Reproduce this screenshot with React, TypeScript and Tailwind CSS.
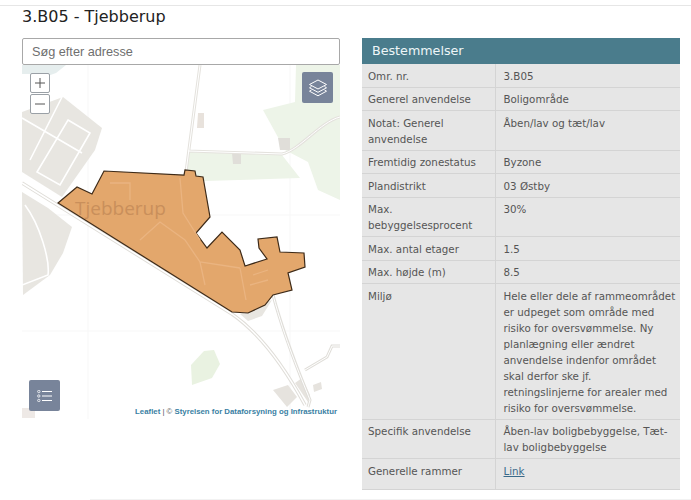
const rows: [string, string][] = [
  ["Omr. nr.", "3.B05"],
  ["Generel anvendelse", "Boligområde"],
  ["Notat: Generel anvendelse", "Åben/lav og tæt/lav"],
  ["Fremtidig zonestatus", "Byzone"],
  ["Plandistrikt", "03 Østby"],
  ["Max. bebyggelsesprocent", "30%"],
  ["Max. antal etager", "1.5"],
  ["Max. højde (m)", "8.5"],
  [
    "Miljø",
    "Hele eller dele af rammeområdet\ner udpeget som område med\nrisiko for oversvømmelse. Ny\nplanlægning eller ændret\nanvendelse indenfor området\nskal derfor ske jf.\nretningslinjerne for arealer med\nrisiko for oversvømmelse.",
  ],
  ["Specifik anvendelse", "Åben-lav boligbebyggelse, Tæt-\nlav boligbebyggelse"],
];

const MapDrawing = () => (
  <svg viewBox="22 65 318 354" className="absolute inset-0 h-full w-full" fill="none">
    {/* tile seams */}
    <path d="M88 65V419M22 331H340M22 215H340M290 65V419" stroke="#f7f7f7" />
    {/* green fields */}
    <path d="M296 65H340V200L318 190L308 162L285 150L263 110L295 102Z" fill="#edf4e8" />
    <path d="M188 152L282 155L300 178L205 181L186 175Z" fill="#edf4e8" />
    <path d="M204 351L214 350L220 364L212 378L192 385L191 365Z" fill="#e9f2e1" />
    <path d="M22 65H66L56 73L42 78L30 74H22Z" fill="#e6eeee" />
    {/* built up areas */}
    <path d="M22 112L63 97L102 128L95 150L62 197L22 172Z" fill="#e8e6e1" />
    <path d="M22 192L48 208L72 227L63 253L50 275L23 295Z" fill="#e8e6e1" />
    <path d="M240 314L272 300L262 316L248 321Z" fill="#e8e6e1" />
    <path d="M273 390L288 385L297 397L287 407Z" fill="#e6e3de" />
    <path d="M295 383L302 378L310 395L308 402Z" fill="#e6e3de" />
    <path d="M313 385L321 382L322 389L314 392Z" fill="#e6e3de" />
    <path d="M22 408H35V418H22Z" fill="#eee9e6" />
    <path d="M198 113H204V128H197Z" fill="#e8e2dc" />
    <path d="M232 153H241V164H233Z" fill="#e0ded9" />
    <path d="M278 138H290V150H280Z" fill="#e0ded9" />
    {/* roads */}
    <path d="M22 183L232 314C262 335 285 368 305 405" stroke="#e0ded9" strokeWidth="3.5" />
    <path d="M22 183L232 314C262 335 285 368 305 405" stroke="#fff" strokeWidth="1.5" />
    <path d="M273 295C285 340 300 375 310 400L308 407" stroke="#e0ded9" strokeWidth="3" />
    <path d="M273 295C285 340 300 375 310 400L308 407" stroke="#fff" strokeWidth="1" />
    <path d="M200 65L186 172M188 151L282 154C300 150 320 122 340 117" stroke="#e4e2dd" strokeWidth="3" />
    <path d="M200 65L186 172M188 151L282 154C300 150 320 122 340 117" stroke="#fff" strokeWidth="1" />
    <path d="M305 370L327 357L332 346H340" stroke="#e0ded9" strokeWidth="3" />
    <path d="M305 370L327 357L332 346H340" stroke="#fff" strokeWidth="1" />
    <path d="M22 118L82 153M62 97L30 160M68 120L90 133L60 185L37 172Z" stroke="#fff" strokeWidth="1.6" />
    <path d="M25 205C40 225 50 260 48 275L22 285" stroke="#fff" strokeWidth="1.6" />
    {/* area */}
    <path
      d="M58 203L77 187L92 194L104 171L184 175L185 170L195 171L196 176L203 177L210 217L196 233L207 248L222 232L240 250L245 266L267 259L259 248L258 239L277 237L280 252L304 253L305 267L288 273L292 290L273 295L265 305L248 313L232 312Z"
      fill="#e3a76c"
      stroke="#3d2a18"
      strokeWidth="1.2"
    />
    <path
      d="M110 183H130V200M180 178L183 213L200 240M140 240L160 222L185 240L200 262L240 268M200 262L205 285M240 268L246 300M250 285L268 280M253 275L268 270"
      stroke="#eab481"
      strokeWidth="1.3"
    />
    <text x="75" y="215" fill="#c98f5b" fontSize="19" fontFamily="'Open Sans', sans-serif">
      Tjebberup
    </text>
  </svg>
);

const App = () => {
  return (
    <div className="h-[500px] w-[691px] overflow-hidden bg-white font-['DejaVu_Sans',sans-serif]">
      <div className="mt-[5px] border-t border-[#e6e6e6] pl-[22px]">
        <h1 className="text-[16px] leading-[21px] text-[#222]">3.B05 - Tjebberup</h1>
      </div>
      <div className="mt-[11px] flex items-start gap-[22px] pl-[22px]">
        <div className="w-[318px]">
          <input
            readOnly
            placeholder="Søg efter adresse"
            className="block h-[27px] w-full rounded-[2px] border border-[#a8a8a8] px-[9px] font-['Liberation_Sans',sans-serif] text-[12.7px] text-[#555] placeholder:text-[#6f6f6f]"
          />
          <div className="relative h-[354px] overflow-hidden bg-white">
            <MapDrawing />
            <div className="absolute left-[8px] top-[8px] flex flex-col gap-px">
              <div className="flex h-[20px] w-[20px] items-center justify-center rounded-[2px] border border-[#9aa0a6] bg-white text-[#555]">
                <svg viewBox="0 0 12 12" className="h-[12px] w-[12px]" stroke="currentColor" strokeWidth="1">
                  <path d="M6 1V11M1 6H11" />
                </svg>
              </div>
              <div className="flex h-[20px] w-[20px] items-center justify-center rounded-[2px] border border-[#9aa0a6] bg-white text-[#555]">
                <svg viewBox="0 0 12 12" className="h-[12px] w-[12px]" stroke="currentColor" strokeWidth="1">
                  <path d="M1 6H11" />
                </svg>
              </div>
            </div>
            <div className="absolute right-[7px] top-[7px] flex h-[31px] w-[31px] items-center justify-center rounded-[2px] bg-[#78849a]">
              <svg viewBox="0 0 20 18" className="h-[18px] w-[20px]" fill="none" stroke="#fff" strokeWidth="1">
                <path d="M10 1L18.5 5.5L10 10L1.5 5.5Z" />
                <path d="M3.5 7.5L1.5 8.8L10 13.3L18.5 8.8L16.5 7.5" />
                <path d="M3.5 11L1.5 12.2L10 16.8L18.5 12.2L16.5 11" />
              </svg>
            </div>
            <div className="absolute bottom-[8px] left-[7px] flex h-[31px] w-[31px] items-center justify-center rounded-[2px] bg-[#78849a]">
              <svg viewBox="0 0 16 12" className="h-[12px] w-[16px]" fill="none" stroke="#fff">
                <path d="M5 1.5H15M5 6H15M5 10.5H15" strokeWidth="1.1" />
                <circle cx="1.8" cy="1.5" r="1.2" strokeWidth="0.8" />
                <circle cx="1.8" cy="6" r="1.2" strokeWidth="0.8" />
                <circle cx="1.8" cy="10.5" r="1.2" strokeWidth="0.8" />
              </svg>
            </div>
            <div className="absolute bottom-[1px] right-[3px] font-['Liberation_Sans',sans-serif] text-[7.8px] font-bold leading-[12px] text-[#3a7fa3]">
              <span>Leaflet</span>
              <span className="font-normal text-[#555]"> | © </span>
              <span>Styrelsen for Dataforsyning og Infrastruktur</span>
            </div>
          </div>
        </div>
        <div className="w-[318px]">
          <div className="flex h-[26px] items-center bg-[#4a7c8c] px-[10px] text-[12.7px] text-[#eef6f8]">Bestemmelser</div>
          <table className="w-full table-fixed border-collapse bg-[#e6e6e6] text-[10.3px] leading-[16px] text-[#555]">
            <colgroup>
              <col className="w-[133px]" />
              <col />
            </colgroup>
            <tbody>
              {rows.map(([label, value]) => (
                <tr key={label} className="border-b border-[#d4d4d4]">
                  <td className="border-r border-[#d4d4d4] px-[6px] pb-[3px] pt-[3.5px] align-top">{label}</td>
                  <td className="whitespace-pre-line pb-[3px] pl-[8px] pr-0 pt-[3.5px] align-top">{value}</td>
                </tr>
              ))}
              <tr className="border-b border-[#d4d4d4]">
                <td className="h-[31px] border-r border-[#d4d4d4] px-[6px] pb-[3px] pt-[3.5px] align-top">Generelle rammer</td>
                <td className="pb-[3px] pl-[8px] pr-0 pt-[3.5px] align-top">
                  <a href="#" className="text-[#3a6a8a] underline">Link</a>
                </td>
              </tr>
            </tbody>
          </table>
        </div>
      </div>
      <div className="ml-[90px] mt-[9px] h-px bg-[#f2f2f2]" />
    </div>
  );
};

export default App;
